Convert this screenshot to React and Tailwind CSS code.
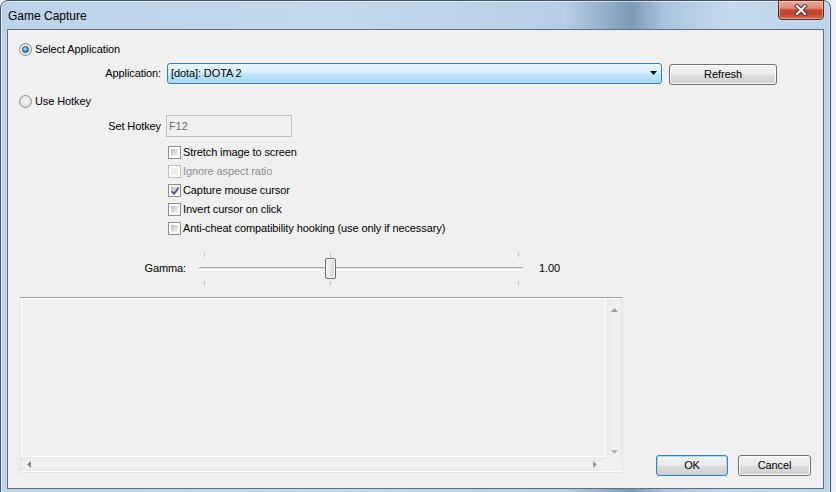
import React from "react";

function Radio({ checked }) {
  return (
    <span className="w-[13px] h-[13px] shrink-0 rounded-full border border-[#8e8f8f] bg-[radial-gradient(circle_at_50%_45%,#f6f6f6_0%,#e4e4e4_55%,#cfcfcf_100%)] flex items-center justify-center">
      {checked ? (
        <span className="w-[7px] h-[7px] rounded-full border border-[#1c4e80] bg-[radial-gradient(circle_at_40%_35%,#bfeaff_0%,#4aa3dd_45%,#1c5f9e_100%)]" />
      ) : null}
    </span>
  );
}

function Check({ checked, disabled }) {
  return (
    <span
      className={
        "relative w-[13px] h-[13px] shrink-0 border p-[2px] bg-white " +
        (disabled ? "border-[#bcbcbc]" : "border-[#8e8f8f]")
      }
    >
      <span
        className={
          "block w-full h-full " +
          (disabled
            ? "bg-[#ececec]"
            : "bg-[linear-gradient(135deg,#b5b9bf_0%,#e2e3e5_60%,#f7f7f7_100%)]")
        }
      />
      {checked ? (
        <svg className="absolute left-[1px] top-[1px]" width="10" height="10" viewBox="0 0 10 10">
          <path d="M1.5 5.2 L4 7.8 L8.6 1.6" fill="none" stroke="#4b5f96" strokeWidth="1.8" />
        </svg>
      ) : null}
    </span>
  );
}

function Btn({ children, def, className = "" }) {
  return (
    <div
      className={
        "h-[21px] rounded-[3px] border flex items-center justify-center bg-[linear-gradient(#f2f2f2_0%,#ebebeb_48%,#dddddd_52%,#cfcfcf_100%)] " +
        (def
          ? "border-[#3c7fb1] shadow-[inset_0_0_0_1px_#9fdaf8]"
          : "border-[#707070] shadow-[inset_0_0_0_1px_#fbfbfb]") +
        " " +
        className
      }
    >
      {children}
    </div>
  );
}

export default function App() {
  const checks = [
    { t: "Stretch image to screen" },
    { t: "Ignore aspect ratio", disabled: true },
    { t: "Capture mouse cursor", checked: true },
    { t: "Invert cursor on click" },
    { t: "Anti-cheat compatibility hooking (use only if necessary)" },
  ];
  return (
    <div className="w-[836px] h-[492px] overflow-hidden bg-[#eaf0f6] font-['Liberation_Sans',Arial,sans-serif] text-[11px] tracking-[-0.1px] text-black">
      <div className="w-[831px] h-[500px] rounded-t-[8px] border border-[#44566b] shadow-[inset_0_0_0_1px_rgba(255,255,255,0.55)] bg-[linear-gradient(90deg,#bcd3ea_0%,#c5d9ee_40%,#b6cee6_68%,#7d9bb6_76%,#a9c3de_80%,#c6daee_88%,#bdd4eb_100%)] flex flex-col">
        {/* title bar */}
        <div className="h-[28px] flex items-start justify-between pl-[7px] pr-[6px]">
          <span className="mt-[6px] text-[12px] tracking-normal text-black">
            Game Capture
          </span>
          <div className="mt-[-1px] w-[46px] h-[20px] rounded-b-[4px] border border-[#5d2a24] shadow-[inset_0_0_0_1px_rgba(255,255,255,0.35)] bg-[linear-gradient(#eaa99a_0%,#dc8a78_40%,#c8462f_50%,#c4452f_75%,#d86e4f_100%)] flex items-center justify-center">
            <svg width="14" height="12" viewBox="0 0 14 12">
              <path d="M3 2 L11 10 M11 2 L3 10" stroke="#4a2a26" strokeWidth="4" strokeLinecap="square" />
              <path d="M3 2 L11 10 M11 2 L3 10" stroke="#ffffff" strokeWidth="2.2" strokeLinecap="square" />
            </svg>
          </div>
        </div>

        {/* client area */}
        <div className="mx-[6px] h-[460px] border border-[#5d6e82] bg-[#f0f0f0] flex flex-col">
          {/* Select Application */}
          <div className="mt-[12px] ml-[11px] h-[14px] flex items-center gap-[3px]">
            <Radio checked />
            <span>Select Application</span>
          </div>

          {/* Application row */}
          <div className="mt-[7px] h-[21px] flex items-center">
            <span className="w-[153px] text-right">Application:</span>
            <div className="ml-[6px] w-[495px] h-[21px] rounded-[3px] border border-[#3c7fb1] bg-[linear-gradient(#eaf6fd_0%,#d9f0fc_45%,#bee6fd_52%,#a7d9f5_100%)] flex items-center justify-between pl-[3px] pr-[3px]">
              <span>[dota]: DOTA 2</span>
              <svg width="8" height="5" viewBox="0 0 8 5">
                <path d="M0 0 L7 0 L3.5 4 Z" fill="#000" />
              </svg>
            </div>
            <Btn className="ml-[7px] w-[108px] mt-[2px]">Refresh</Btn>
          </div>

          {/* Use Hotkey */}
          <div className="mt-[10px] ml-[11px] h-[14px] flex items-center gap-[3px]">
            <Radio />
            <span>Use Hotkey</span>
          </div>

          {/* Set Hotkey */}
          <div className="mt-[7px] h-[22px] flex items-center">
            <span className="w-[153px] text-right">Set Hotkey</span>
            <div className="ml-[5px] w-[126px] h-[22px] border border-[#bfbfbf] bg-[#f0f0f0] flex items-center pl-[2px] text-[#6d6d6d]">
              F12
            </div>
          </div>

          {/* checkboxes */}
          <div className="mt-[6px] flex flex-col">
            {checks.map((c) => (
              <div key={c.t} className="h-[19px] ml-[160px] flex items-center gap-[2px]">
                <Check checked={c.checked} disabled={c.disabled} />
                <span className={c.disabled ? "text-[#8d8d8d]" : ""}>{c.t}</span>
              </div>
            ))}
          </div>

          {/* Gamma */}
          <div className="mt-[14px] h-[34px] flex items-start">
            <span className="mt-[6px] w-[178px] h-[21px] flex items-center justify-end">Gamma:</span>
            <div className="ml-[13px] relative w-[324px] h-[34px]">
              <span className="absolute left-[5px] top-[1px] w-px h-[4px] bg-[#c2c2c2]" />
              <span className="absolute left-[131px] top-[1px] w-px h-[4px] bg-[#c2c2c2]" />
              <span className="absolute left-[319px] top-[1px] w-px h-[4px] bg-[#c2c2c2]" />
              <span className="absolute left-[5px] top-[29px] w-px h-[4px] bg-[#c2c2c2]" />
              <span className="absolute left-[131px] top-[29px] w-px h-[4px] bg-[#c2c2c2]" />
              <span className="absolute left-[319px] top-[29px] w-px h-[4px] bg-[#c2c2c2]" />
              <span className="absolute left-0 right-0 top-[15px] h-[3px] border-t border-[#a8a8a8] border-b border-b-white bg-[#e2e4e4]" />
              <span className="absolute left-[126px] top-[6px] w-[11px] h-[21px] rounded-[2px] border border-[#6f6f6f] shadow-[inset_0_0_0_1px_#fafafa] bg-[linear-gradient(90deg,#f3f3f3_0%,#e6e6e6_50%,#d4d4d4_100%)]" />
            </div>
            <span className="mt-[6px] ml-[16px] h-[21px] flex items-center">1.00</span>
          </div>

          {/* bottom section */}
          <div className="mt-[11px] flex items-start">
            <div className="ml-[12px] w-[603px] h-[176px] border border-[#e3e3e3] border-t-[#a0a0a0] flex flex-col">
              <div className="flex-1 flex border-t border-l border-white">
                <div className="flex-1" />
                <div className="w-[17px] border-l border-white bg-[linear-gradient(90deg,#e9e9e9,#f2f2f2_60%,#eaeaea)] flex flex-col items-center justify-between pt-[9px] pb-[2px]">
                  <svg width="7" height="4" viewBox="0 0 7 4">
                    <path d="M0 4 L3.5 0 L7 4 Z" fill="#9a9a9a" />
                  </svg>
                  <svg width="7" height="4" viewBox="0 0 7 4">
                    <path d="M0 0 L7 0 L3.5 4 Z" fill="#b0b0b0" />
                  </svg>
                </div>
              </div>
              <div className="h-[16px] flex border-b border-white">
                <div className="flex-1 border-t border-white bg-[linear-gradient(#e9e9e9,#f2f2f2_60%,#eaeaea)] flex items-center justify-between pl-[6px] pr-[8px]">
                  <svg width="4" height="7" viewBox="0 0 4 7">
                    <path d="M4 0 L0 3.5 L4 7 Z" fill="#8a8a8a" />
                  </svg>
                  <svg width="4" height="7" viewBox="0 0 4 7">
                    <path d="M0 0 L4 3.5 L0 7 Z" fill="#9a9a9a" />
                  </svg>
                </div>
                <div className="w-[17px] bg-[#f0f0f0]" />
              </div>
            </div>
            <div className="ml-[33px] mt-[158px] flex gap-[10px]">
              <Btn def className="w-[72px]">OK</Btn>
              <Btn className="w-[73px]">Cancel</Btn>
            </div>
          </div>
        </div>
      </div>
    </div>
  );
}
